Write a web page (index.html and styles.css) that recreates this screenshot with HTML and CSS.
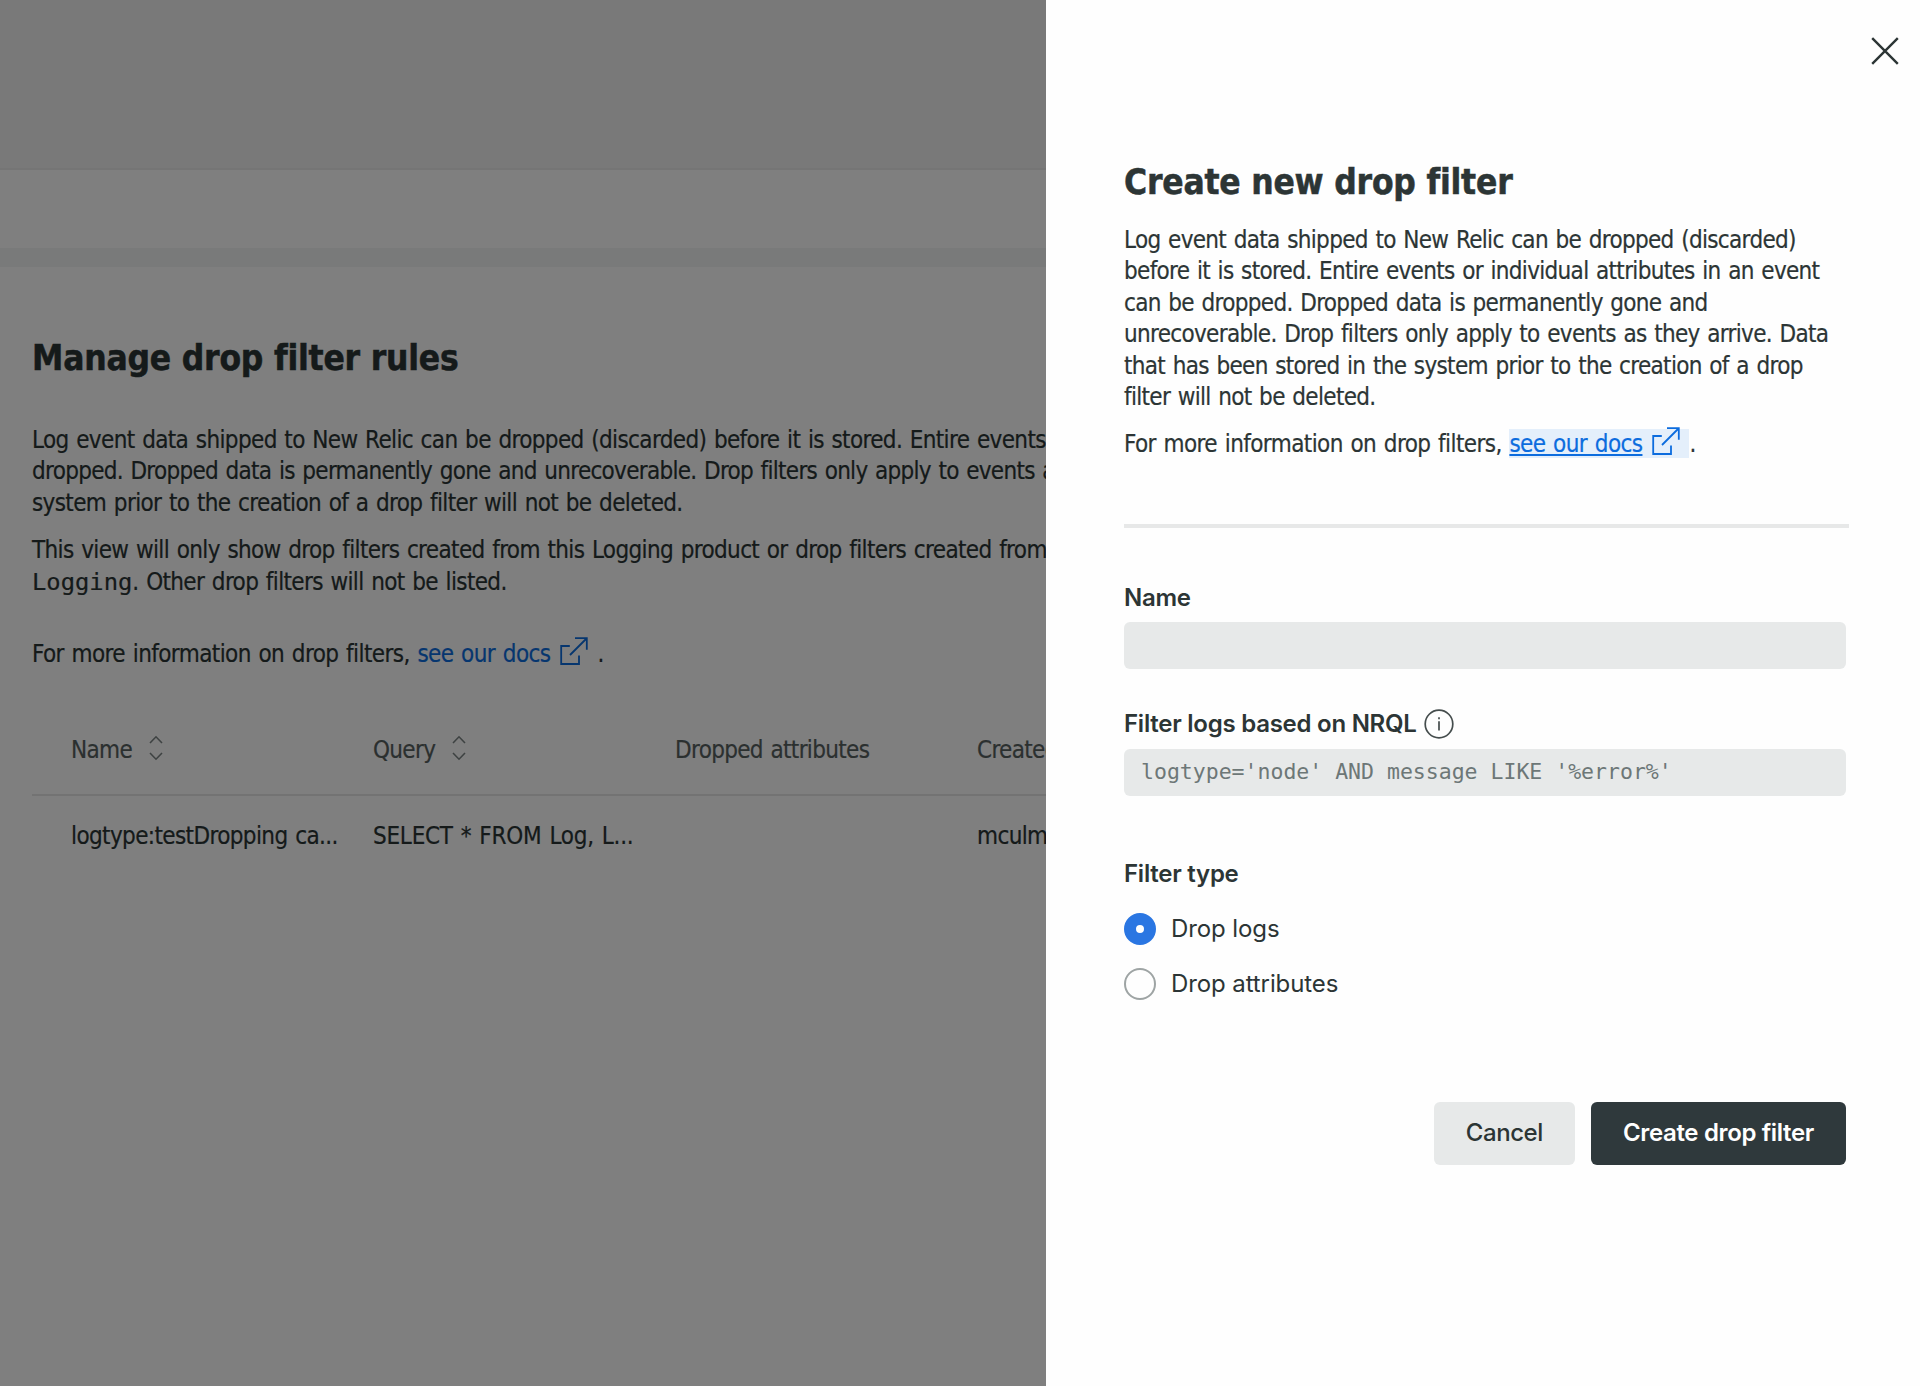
FILE: index.html
```html
<!DOCTYPE html>
<html lang="en">
<head>
<meta charset="utf-8">
<title>Manage drop filter rules</title>
<link rel="stylesheet" href="styles.css">
</head>
<body>
<svg class="defs" width="0" height="0">
  <symbol id="external" viewBox="0 0 28 28"><path d="M9.8 9H1.2V27H19V18.5M10 18L26.5 1.5M15 1.2H26.8V12.8"/></symbol>
  <symbol id="sort" viewBox="0 0 14 26"><path d="M1 8L7 1.8L13 8M1 18L7 24.2L13 18"/></symbol>
</svg>
<main class="page">
  <header class="topbar"></header>
  <div class="toolbar"></div>
  <section class="content">
    <h1 class="title">Manage drop filter rules</h1>
    <p class="text intro">
      <span class="line">Log event data shipped to New Relic can be dropped (discarded) before it is stored. Entire events</span>
      <span class="line tight">dropped. Dropped data is permanently gone and unrecoverable. Drop filters only apply to events as</span>
      <span class="line">system prior to the creation of a drop filter will not be deleted.</span>
    </p>
    <p class="text scope">
      <span class="line">This view will only show drop filters created from this Logging product or drop filters created from</span>
      <span class="line"><code class="code">Logging</code>. Other drop filters will not be listed.</span>
    </p>
    <p class="text more"><span class="line">For more information on drop filters, <a class="link">see our docs<svg class="external"><use href="#external"/></svg></a>.</span></p>
    <div class="table">
      <div class="row head">
        <div class="cell">Name<svg class="sort"><use href="#sort"/></svg></div>
        <div class="cell">Query<svg class="sort"><use href="#sort"/></svg></div>
        <div class="cell">Dropped attributes</div>
        <div class="cell">Created by</div>
      </div>
      <div class="row">
        <div class="cell">logtype:testDropping ca...</div>
        <div class="cell query">SELECT * FROM Log, L...</div>
        <div class="cell"></div>
        <div class="cell">mculm</div>
      </div>
    </div>
  </section>
</main>
<div class="overlay"></div>
<aside class="drawer">
  <svg class="close" viewBox="0 0 28 28"><path d="M1.2 1.2L26.8 26.8M26.8 1.2L1.2 26.8"/></svg>
  <h2 class="title">Create new drop filter</h2>
  <p class="text about">
    <span class="line">Log event data shipped to New Relic can be dropped (discarded)</span>
    <span class="line">before it is stored. Entire events or individual attributes in an event</span>
    <span class="line">can be dropped. Dropped data is permanently gone and</span>
    <span class="line">unrecoverable. Drop filters only apply to events as they arrive. Data</span>
    <span class="line">that has been stored in the system prior to the creation of a drop</span>
    <span class="line">filter will not be deleted.</span>
  </p>
  <p class="text docs"><span class="line">For more information on drop filters, <a class="link marked"><u>see our docs</u><svg class="external"><use href="#external"/></svg></a>.</span></p>
  <hr class="rule">
  <form class="form">
    <label class="label">Name</label>
    <div class="field"></div>
    <label class="label nrql">Filter logs based on NRQL
      <svg class="info" viewBox="0 0 30 30"><circle cx="15" cy="15" r="13.8"/><path d="M15 12.3V21.6M15 8.2V10.2"/></svg>
    </label>
    <div class="field code">logtype='node' AND message LIKE '%error%'</div>
    <div class="label type">Filter type</div>
    <div class="option"><span class="radio on"></span>Drop logs</div>
    <div class="option"><span class="radio"></span>Drop attributes</div>
    <div class="actions">
      <button type="button" class="button">Cancel</button>
      <button type="button" class="button primary">Create drop filter</button>
    </div>
  </form>
</aside>
</body>
</html>
```
FILE: styles.css
```css
* { box-sizing: border-box; }
body {
  margin: 0;
  height: 1386px;
  position: relative;
  overflow: hidden;
  background: #fff;
  color: #2a3434;
  font: 24px/31.42px "DejaVu Sans Condensed", "DejaVu Sans", sans-serif;
  font-stretch: condensed;
}
.defs { position: absolute; }
svg { fill: none; stroke: currentColor; stroke-width: 2; }
.page { height: 1386px; display: flex; flex-direction: column; }
.topbar { height: 170px; background: #f3f3f3; border-bottom: 2px solid #eaeaea; }
.toolbar { height: 97px; border-bottom: 19px solid #f3f4f4; }
.content { padding: 66px 0 0 32px; }
.title { margin: 0; font-size: 35px; line-height: 50px; font-weight: 700; letter-spacing: -0.2px; white-space: nowrap; -webkit-text-stroke: 0.5px; }
.text { margin: 0; }
.line { display: block; height: 31.42px; white-space: nowrap; letter-spacing: -0.68px; word-spacing: 1.4px; }
.line, .row { -webkit-text-stroke: 0.2px; }
.content .line { letter-spacing: -0.64px; }
.content .tight { letter-spacing: -0.71px; }
.code { font-family: "DejaVu Sans Mono", monospace; }
.line .code { font-size: 23.8px; line-height: 1; letter-spacing: 0; }
.intro { margin-top: 42px; }
.scope { margin-top: 16px; }
.more { margin-top: 41px; }
.more .line, .docs .line { letter-spacing: -0.59px; }
.link { color: #0c6cde; }
.external { width: 28px; height: 28px; margin: -8px 9px 0 10px; vertical-align: -3px; stroke-width: 1.8; }
.table { margin-top: 36px; }
.row { display: grid; grid-template-columns: repeat(4, 302px); padding-left: 39px; height: 81px; align-items: center; letter-spacing: -0.62px; word-spacing: 1.4px; white-space: nowrap; }
.head { height: 90px; border-bottom: 2px solid #e6e7e7; color: #56605f; letter-spacing: -0.67px; }
.query { letter-spacing: -0.25px; }
.sort { width: 14px; height: 26px; margin: -6px 0 0 17px; vertical-align: -3px; stroke-width: 1.6; color: #7d8585; }
.overlay { position: absolute; inset: 0; background: rgba(0, 0, 0, .5); }
.drawer { position: absolute; top: 0; right: 0; width: 874px; height: 1386px; padding: 157px 71px 0 78px; background: #fefefe; color: #2c3535; }
.close { position: absolute; top: 37px; right: 21px; width: 28px; height: 28px; stroke-width: 2.4; }
.about { margin-top: 18px; }
.docs { margin-top: 16px; }
.marked { padding-top: 1px; background: #e4effb; }
.rule { margin: 63px 0 0; border: 0; height: 4px; background: #e7e8e8; }
.form { padding-right: 3px; font-family: Inter, sans-serif; font-size: 24px; }
.label { display: flex; align-items: center; gap: 7px; height: 32px; margin-top: 54px; font-weight: 600; letter-spacing: -0.25px; }
.field { height: 47px; margin-top: 8px; border-radius: 6px; background: #e7e9e9; }
.nrql { margin-top: 39px; }
.nrql + .field { margin-top: 9px; }
.info { width: 30px; height: 30px; stroke-width: 1.7; color: #454d4d; }
.field.code { padding-left: 17px; line-height: 46px; font-size: 21.5px; color: #6d7777; white-space: pre; }
.type { margin-top: 62px; }
.option { display: flex; align-items: center; gap: 15px; height: 32px; margin-top: 23px; letter-spacing: -0.1px; }
.radio { width: 32px; height: 32px; border: 2px solid #9ea4a4; border-radius: 50%; }
.on { border: 12px solid #2a76e2; }
.actions { display: flex; justify-content: flex-end; gap: 16px; margin-top: 102px; }
.button { height: 63px; padding: 0 32px 1px; border: 0; border-radius: 6px; background: #e7e9e9; color: #2c3535; font: 500 24px Inter, sans-serif; letter-spacing: -0.4px; }
.primary { background: #2f393c; color: #fff; font-weight: 600; letter-spacing: -0.35px; }
```
